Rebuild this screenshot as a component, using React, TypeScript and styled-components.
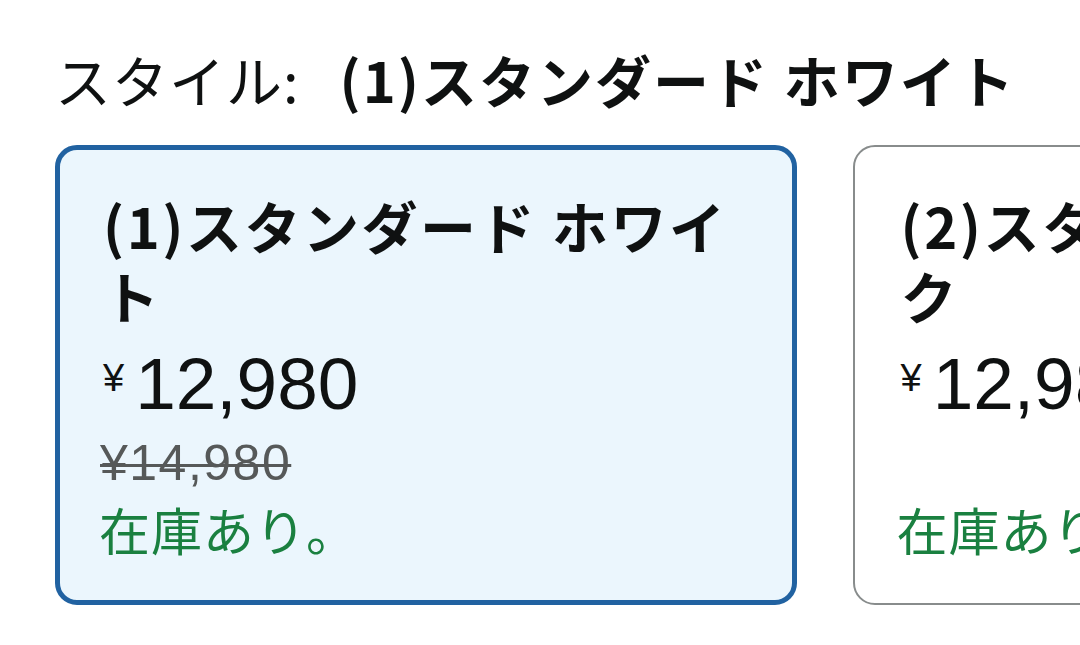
import { FC } from "react";
import styled, { createGlobalStyle } from "styled-components";

const JP = `"Noto Sans CJK JP", "Noto Sans", sans-serif`;
const NUM = `"Liberation Sans", "Noto Sans CJK JP", sans-serif`;

interface IVariant {
	name:string;
	price:string;
	listPrice?:string;
	selected?:boolean;
}

const VARIANTS:IVariant[] = [
	{ name: "(1)スタンダード ホワイト", price: "12,980", listPrice: "¥14,980", selected: true },
	{ name: "(2)スタンダード ブラック", price: "12,980" },
];

const VariantCard:FC<IVariant> = props => {
	return (
		<Card $selected={ props.selected }>
			<Title>{ props.name }</Title>
			<Price>
				<Yen>¥</Yen>
				<Amount>{ props.price }</Amount>
			</Price>
			<ListPrice>{ props.listPrice }</ListPrice>
			<Stock>在庫あり。</Stock>
		</Card>
	);
};

export default function App() {
	return (
		<>
			<GlobalStyle />
			<Page>
				<Header>
					<Label>スタイル:</Label>
					<Value>{ VARIANTS[0].name }</Value>
				</Header>
				<Row>
					{ VARIANTS.map((v, i) => (
						<VariantCard key={ "v" + i } { ...v } />
					)) }
				</Row>
			</Page>
		</>
	);
}

const GlobalStyle = createGlobalStyle`
	html, body {
		margin:0;
		padding:0;
		background:#fff;
		overflow:hidden;
	}
	body {
		font-family:${ JP };
		color:#0f1111;
	}
`;

const Page = styled.div`
	width:1080px;
	height:645px;
	overflow:hidden;
	padding:43px 0 0 55px;
	box-sizing:border-box;
`;

const Header = styled.div`
	display:flex;
	align-items:baseline;
	gap:40px;
	font-size:56px;
	line-height:72px;
	white-space:nowrap;
`;

const Label = styled.span`
	font-weight:400;
	letter-spacing:1px;
	color:#0f1111;
`;

const Value = styled.span`
	font-weight:700;
	letter-spacing:2px;
`;

const Row = styled.div`
	display:flex;
	gap:56px;
	margin-top:30px;
`;

const Card = styled.div<{ $selected?:boolean }>`
	flex:0 0 742px;
	height:460px;
	box-sizing:border-box;
	border-radius:22px;
	border:${ p => p.$selected ? "5px solid #2162a1" : "2.5px solid #888c8c" };
	background:${ p => p.$selected ? "#ebf6fd" : "#fff" };
	padding:${ p => p.$selected ? "40px 45px 0 43px" : "42.5px 47.5px 0 45.5px" };
	display:flex;
	flex-direction:column;
`;

const Title = styled.div`
	font-size:56px;
	font-weight:700;
	line-height:70px;
	letter-spacing:2.5px;
`;

const Price = styled.div`
	display:flex;
	align-items:flex-start;
	margin-top:9px;
	height:90px;
`;

const Yen = styled.span`
	font-family:${ NUM };
	font-size:38px;
	line-height:34px;
	margin-top:22px;
	margin-right:11px;
`;

const Amount = styled.span`
	font-family:${ NUM };
	font-size:73px;
	line-height:90px;
	font-weight:400;
`;

const ListPrice = styled.div`
	font-family:${ NUM };
	font-size:50px;
	line-height:60px;
	height:60px;
	margin-top:4px;
	margin-left:-3px;
	letter-spacing:1.5px;
	color:#565959;
	text-decoration:line-through;
	text-decoration-thickness:3px;
`;

const Stock = styled.div`
	font-size:51px;
	line-height:70px;
	letter-spacing:1px;
	margin-top:1px;
	margin-left:-4px;
	color:#1a8040;
`;
